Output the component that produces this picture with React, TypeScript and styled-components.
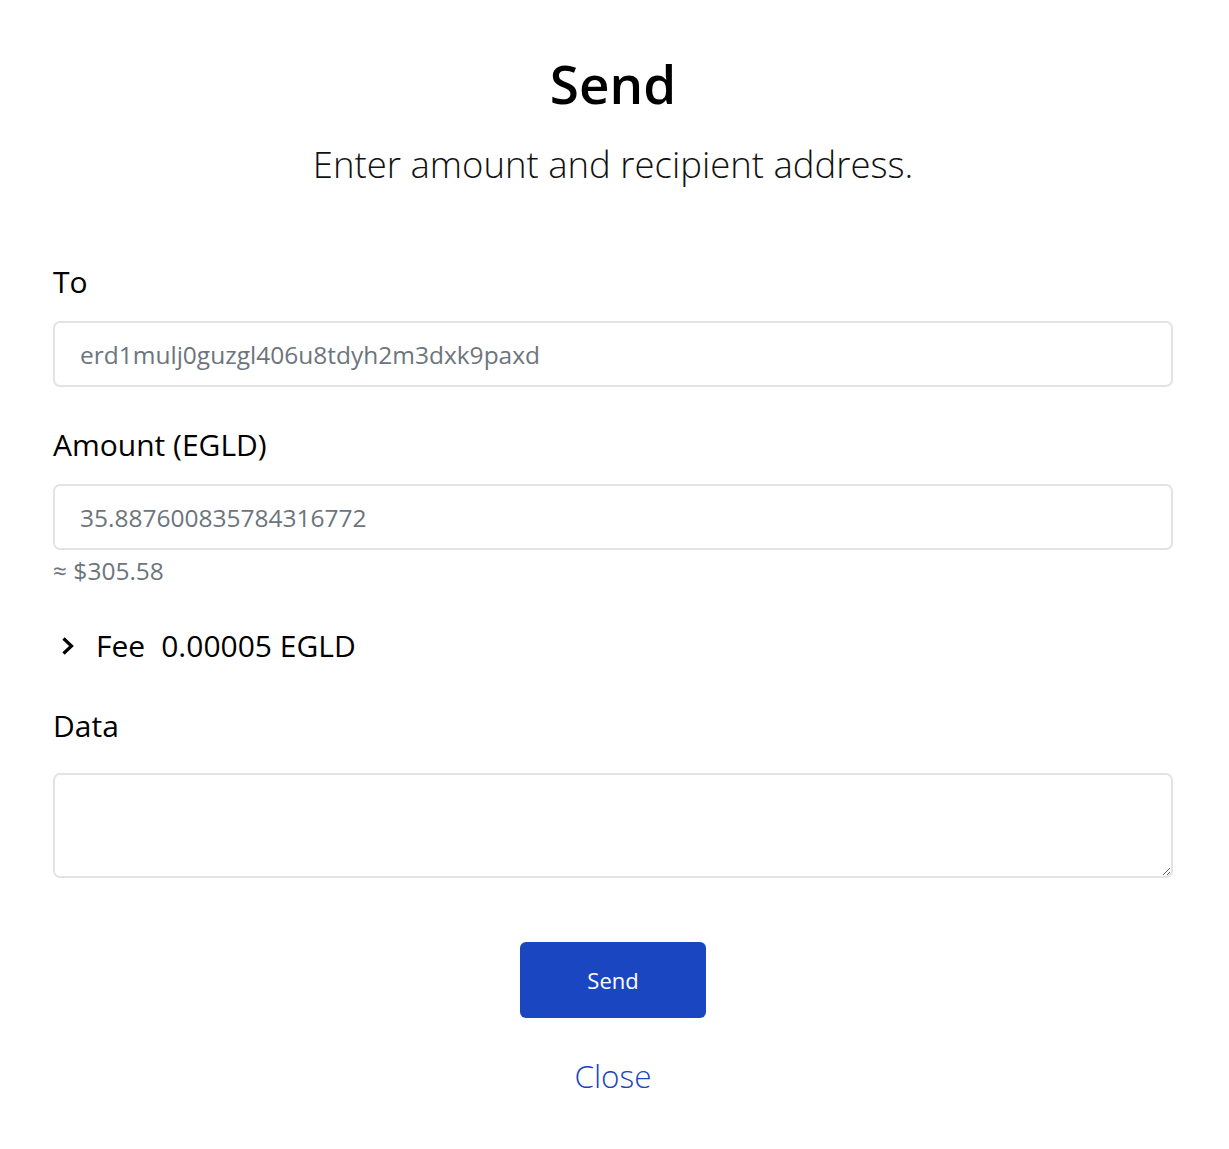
import React from "react";
import styled, { createGlobalStyle } from "styled-components";

const Global = createGlobalStyle`
  html, body { margin: 0; padding: 0; background: #fff; }
  body { font-family: "Open Sans", "Noto Sans", sans-serif; color: #000; }
  * { box-sizing: border-box; }
`;

const Page = styled.div`
  padding: 52px 56px 60px 53px;
  display: flex;
  flex-direction: column;
`;

const Title = styled.h1`
  margin: 0;
  text-align: center;
  font-size: 53px;
  font-weight: 600;
  line-height: 64px;
`;

const Subtitle = styled.p`
  margin: 24px 0 0;
  text-align: center;
  font-size: 36.5px;
  font-weight: 300;
  line-height: 48px;
  color: #111;
`;

const Form = styled.form`
  margin-top: 74px;
  display: flex;
  flex-direction: column;
`;

const Field = styled.div<{ $mt?: number }>`
  display: flex;
  flex-direction: column;
  margin-top: ${(p) => p.$mt ?? 0}px;
`;

const Label = styled.label<{ $mb?: number }>`
  font-size: 30px;
  line-height: 40px;
  margin-bottom: ${(p) => p.$mb ?? 19}px;
`;

const Input = styled.input`
  height: 66px;
  border: 2px solid #e3e3e3;
  border-radius: 7px;
  padding: 0 25px;
  font-family: inherit;
  font-size: 24.5px;
  color: #6c757d;
  background: #fff;
  outline: none;
`;

const Textarea = styled.textarea`
  height: 105px;
  border: 2px solid #e3e3e3;
  border-radius: 7px;
  padding: 12px 25px;
  font-family: inherit;
  font-size: 24px;
  resize: vertical;
  outline: none;
`;

const Hint = styled.div`
  font-size: 24.5px;
  line-height: 30px;
  color: #6c757d;
  margin-top: 6px;
`;

const FeeRow = styled.div`
  display: flex;
  align-items: center;
  margin-top: 40px;
  padding-left: 8px;
  font-size: 30px;
  line-height: 40px;
`;

const Chevron = styled.svg`
  margin-right: 20px;
  flex: none;
`;

const FeeLabel = styled.span`
  margin-right: 16px;
`;

const Actions = styled.div`
  display: flex;
  flex-direction: column;
  align-items: center;
  margin-top: 64px;
`;

const PrimaryButton = styled.button`
  width: 186px;
  height: 76px;
  border: none;
  border-radius: 6px;
  background: #1b46c2;
  color: #fff;
  font-family: inherit;
  font-size: 22px;
  cursor: pointer;
`;

const LinkButton = styled.button`
  margin-top: 37px;
  border: none;
  background: none;
  color: #1a44bf;
  font-family: inherit;
  font-size: 31.5px;
  font-weight: 300;
  line-height: 42px;
  padding: 0;
  cursor: pointer;
`;

export default function App() {
  return (
    <>
      <Global />
      <Page>
        <Title>Send</Title>
        <Subtitle>Enter amount and recipient address.</Subtitle>
        <Form onSubmit={(e) => e.preventDefault()}>
          <Field>
            <Label>To</Label>
            <Input defaultValue="erd1mulj0guzgl406u8tdyh2m3dxk9paxd" />
          </Field>
          <Field $mt={38}>
            <Label>Amount (EGLD)</Label>
            <Input defaultValue="35.887600835784316772" />
            <Hint>≈ $305.58</Hint>
          </Field>
          <FeeRow>
            <Chevron width="15" height="24" viewBox="0 0 15 24" fill="none">
              <path d="M2.5 4.5 L10.5 12 L2.5 19.5" stroke="#000" strokeWidth="3.2" />
            </Chevron>
            <FeeLabel>Fee</FeeLabel>
            <span>0.00005 EGLD</span>
          </FeeRow>
          <Field $mt={40}>
            <Label $mb={27}>Data</Label>
            <Textarea />
          </Field>
          <Actions>
            <PrimaryButton type="submit">Send</PrimaryButton>
            <LinkButton type="button">Close</LinkButton>
          </Actions>
        </Form>
      </Page>
    </>
  );
}
